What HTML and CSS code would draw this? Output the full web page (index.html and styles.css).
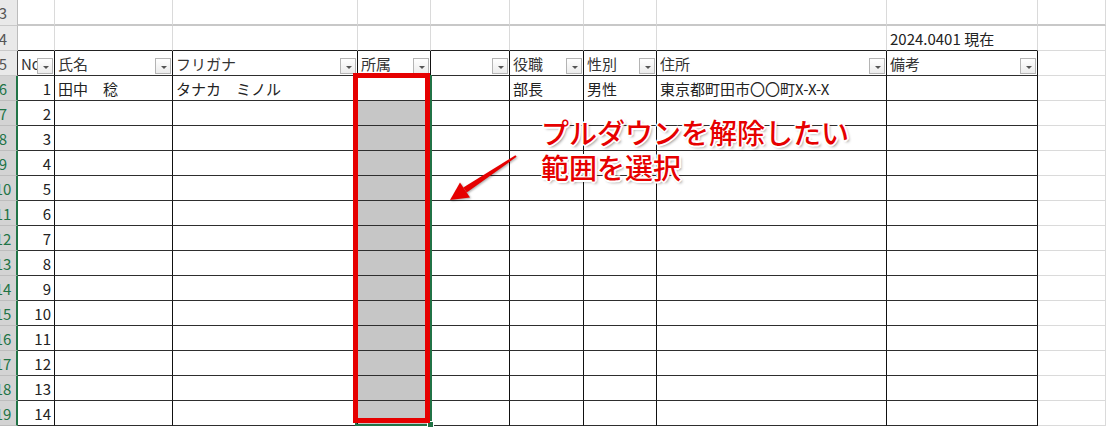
FILE: index.html
```html
<!DOCTYPE html>
<html lang="ja">
<head>
<meta charset="utf-8">
<title>Sheet</title>
<link rel="stylesheet" href="styles.css">
</head>
<body>
<div class="sheet">
  <div class="row r-top">
    <div class="rh"><span>3</span></div>
    <div class="x r3"></div><div class="x r3"></div><div class="x r3"></div><div class="x r3"></div><div class="x r3"></div><div class="x r3"></div><div class="x r3"></div><div class="x r3"></div><div class="x r3"></div><div class="x r3"></div>
  </div>
  <div class="row">
    <div class="rh"><span>4</span></div>
    <div class="x r4"></div><div class="x r4"></div><div class="x r4"></div><div class="x r4"></div><div class="x r4"></div><div class="x r4"></div><div class="x r4"></div><div class="x r4"></div><div class="x r4 txt">2024.0401 現在</div><div class="x"></div>
  </div>
  <div class="row">
    <div class="rh rh5"><span>5</span></div>
    <div class="t h txt">No<i class="fb"></i></div>
    <div class="t h txt">氏名<i class="fb"></i></div>
    <div class="t h txt">フリガナ<i class="fb"></i></div>
    <div class="t h txt">所属<i class="fb"></i></div>
    <div class="t h txt"><i class="fb"></i></div>
    <div class="t h txt">役職<i class="fb"></i></div>
    <div class="t h txt">性別<i class="fb"></i></div>
    <div class="t h txt">住所<i class="fb"></i></div>
    <div class="t h txt">備考<i class="fb"></i></div>
    <div class="x"></div>
  </div>
  <div class="row">
    <div class="rh sel"><span>6</span></div>
    <div class="t n">1</div><div class="t txt">田中　稔</div><div class="t txt">タナカ　ミノル</div><div class="t"></div><div class="t"></div><div class="t txt">部長</div><div class="t txt">男性</div><div class="t txt">東京都町田市〇〇町X-X-X</div><div class="t"></div><div class="x"></div>
  </div>
  <div class="row">
    <div class="rh sel"><span>7</span></div>
    <div class="t n">2</div><div class="t"></div><div class="t"></div><div class="t g"></div><div class="t"></div><div class="t"></div><div class="t"></div><div class="t"></div><div class="t"></div><div class="x"></div>
  </div>
  <div class="row">
    <div class="rh sel"><span>8</span></div>
    <div class="t n">3</div><div class="t"></div><div class="t"></div><div class="t g"></div><div class="t"></div><div class="t"></div><div class="t"></div><div class="t"></div><div class="t"></div><div class="x"></div>
  </div>
  <div class="row">
    <div class="rh sel"><span>9</span></div>
    <div class="t n">4</div><div class="t"></div><div class="t"></div><div class="t g"></div><div class="t"></div><div class="t"></div><div class="t"></div><div class="t"></div><div class="t"></div><div class="x"></div>
  </div>
  <div class="row">
    <div class="rh sel"><span>10</span></div>
    <div class="t n">5</div><div class="t"></div><div class="t"></div><div class="t g"></div><div class="t"></div><div class="t"></div><div class="t"></div><div class="t"></div><div class="t"></div><div class="x"></div>
  </div>
  <div class="row">
    <div class="rh sel"><span>11</span></div>
    <div class="t n">6</div><div class="t"></div><div class="t"></div><div class="t g"></div><div class="t"></div><div class="t"></div><div class="t"></div><div class="t"></div><div class="t"></div><div class="x"></div>
  </div>
  <div class="row">
    <div class="rh sel"><span>12</span></div>
    <div class="t n">7</div><div class="t"></div><div class="t"></div><div class="t g"></div><div class="t"></div><div class="t"></div><div class="t"></div><div class="t"></div><div class="t"></div><div class="x"></div>
  </div>
  <div class="row">
    <div class="rh sel"><span>13</span></div>
    <div class="t n">8</div><div class="t"></div><div class="t"></div><div class="t g"></div><div class="t"></div><div class="t"></div><div class="t"></div><div class="t"></div><div class="t"></div><div class="x"></div>
  </div>
  <div class="row">
    <div class="rh sel"><span>14</span></div>
    <div class="t n">9</div><div class="t"></div><div class="t"></div><div class="t g"></div><div class="t"></div><div class="t"></div><div class="t"></div><div class="t"></div><div class="t"></div><div class="x"></div>
  </div>
  <div class="row">
    <div class="rh sel"><span>15</span></div>
    <div class="t n">10</div><div class="t"></div><div class="t"></div><div class="t g"></div><div class="t"></div><div class="t"></div><div class="t"></div><div class="t"></div><div class="t"></div><div class="x"></div>
  </div>
  <div class="row">
    <div class="rh sel"><span>16</span></div>
    <div class="t n">11</div><div class="t"></div><div class="t"></div><div class="t g"></div><div class="t"></div><div class="t"></div><div class="t"></div><div class="t"></div><div class="t"></div><div class="x"></div>
  </div>
  <div class="row">
    <div class="rh sel"><span>17</span></div>
    <div class="t n">12</div><div class="t"></div><div class="t"></div><div class="t g"></div><div class="t"></div><div class="t"></div><div class="t"></div><div class="t"></div><div class="t"></div><div class="x"></div>
  </div>
  <div class="row">
    <div class="rh sel"><span>18</span></div>
    <div class="t n">13</div><div class="t"></div><div class="t"></div><div class="t g"></div><div class="t"></div><div class="t"></div><div class="t"></div><div class="t"></div><div class="t"></div><div class="x"></div>
  </div>
  <div class="row">
    <div class="rh sel"><span>19</span></div>
    <div class="t n">14</div><div class="t"></div><div class="t"></div><div class="t g"></div><div class="t"></div><div class="t"></div><div class="t"></div><div class="t"></div><div class="t"></div><div class="x"></div>
  </div>

  <div class="selection"><i class="handle"></i></div>
  <div class="redbox"></div>
  <svg class="arrow" width="90" height="60" viewBox="440 150 90 60">
    <polygon points="516.6,156.8 515.4,155.2 463.3,187.5 466.7,192.5" fill="#e60000"/>
    <polygon points="450,200 460,182.5 470,197.5" fill="#e60000"/>
  </svg>
  <div class="note">プルダウンを解除したい<br>範囲を選択</div>
</div>
</body>
</html>
```

FILE: styles.css
```css
html, body {
  margin: 0;
  padding: 0;
  background: #ffffff;
  overflow: hidden;
}

.sheet {
  position: relative;
  width: 1106px;
  height: 427px;
  overflow: hidden;
  font-family: "Noto Sans CJK JP", "Noto Sans", sans-serif;
  font-size: 15px;
  color: #222;
}

.row {
  display: grid;
  grid-template-columns: 18px 37px 118px 185px 73px 79px 74px 73px 230px 151px 1fr;
  height: 25px;
}

.row.r-top {
  height: 26px;
}

.row > div {
  box-sizing: border-box;
  min-width: 0;
  overflow: hidden;
  white-space: nowrap;
  display: flex;
  align-items: center;
  line-height: 1;
}

/* row headers */
.rh {
  background: #e9e9e9;
  border-right: 1px solid #bcbcbc;
  border-bottom: 1px solid #c9c9c9;
  color: #555;
  font-size: 15px;
}
.rh span {
  display: block;
  width: 28px;
  margin-left: -11px;
  flex: none;
  text-align: center;
}
.rh5 {
  border-right-color: #333;
}
.rh.sel {
  background: #d3d3d3;
  color: #217346;
  border-right: 2px solid #217346;
  border-bottom-color: #bdbdbd;
}

/* plain grid cells */
.x {
  border-right: 1px solid #dadada;
  border-bottom: 1px solid #dadada;
}
.x.r3 {
  border-bottom: 2px solid #c8c8c8;
}
.x.r4 {
  border-bottom: 1px solid #222;
}

/* table cells */
.t {
  border-right: 1px solid #111;
  border-bottom: 1px solid #2e2e2e;
}
.txt {
  padding: 1px 3px 0;
}
.n {
  justify-content: flex-end;
  padding: 1px 3px 0 0;
}
.g {
  background: #c6c6c6;
}

/* header with filter button */
.row > .h {
  position: relative;
  color: #333;
}
.fb {
  position: absolute;
  right: 1px;
  bottom: 1px;
  width: 16px;
  height: 16px;
  box-sizing: border-box;
  border: 1px solid #b4b4b4;
  background: linear-gradient(#ffffff, #ececec);
}
.fb::after {
  content: "";
  position: absolute;
  left: 5px;
  top: 7px;
  border-left: 3px solid transparent;
  border-right: 3px solid transparent;
  border-top: 3px solid #555;
}

/* overlays */
.selection {
  position: absolute;
  left: 355px;
  top: 75px;
  width: 77px;
  height: 351px;
  box-sizing: border-box;
  border: 2px solid #217346;
}
.handle {
  position: absolute;
  right: -4px;
  bottom: -4px;
  width: 5px;
  height: 5px;
  background: #217346;
  border: 1px solid #fff;
}
.redbox {
  position: absolute;
  left: 353px;
  top: 73px;
  width: 77px;
  height: 350px;
  box-sizing: border-box;
  border: 5px solid #e60000;
}
.arrow {
  position: absolute;
  left: 440px;
  top: 150px;
  filter: drop-shadow(1px 1px 1px rgba(0, 0, 0, 0.35));
}
.note {
  position: absolute;
  left: 541px;
  top: 115px;
  font-size: 28px;
  font-weight: 500;
  line-height: 35px;
  color: #e60000;
  white-space: nowrap;
  text-shadow:
    -1px -1px 0 #fff, 1px -1px 0 #fff, -1px 1px 0 #fff, 1px 1px 0 #fff,
    0 -2px 0 #fff, 0 2px 0 #fff, -2px 0 0 #fff, 2px 0 0 #fff,
    2px 2px 3px rgba(0, 0, 0, 0.45);
}
```
